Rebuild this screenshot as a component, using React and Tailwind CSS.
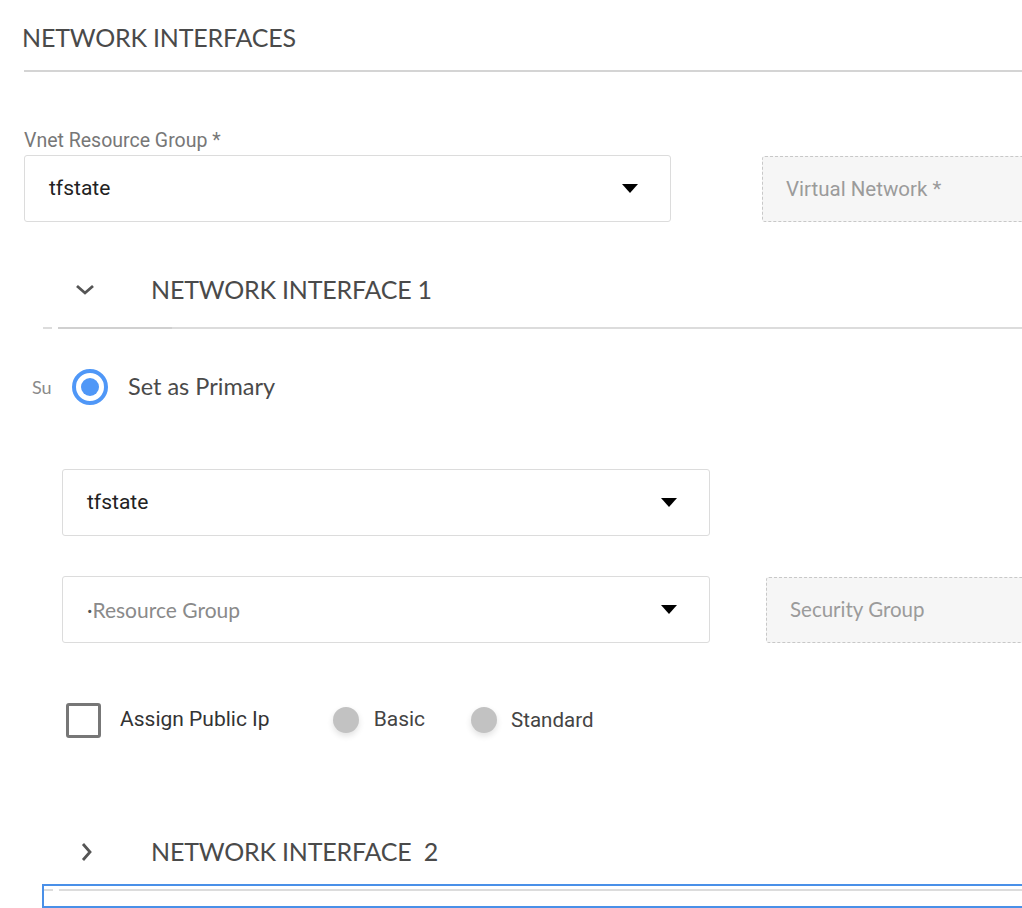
import React from "react";

const Caret = () => (
  <svg width="16" height="9" viewBox="0 0 16 9" className="shrink-0">
    <path d="M0 0 L16 0 L8 9 Z" fill="#000" />
  </svg>
);

const Select = ({ value, placeholder, className = "" }) => (
  <div className={`flex items-center justify-between h-[67px] border border-[#dcdcdc] rounded-[3px] bg-white pl-[24px] pr-[32px] ${className}`}>
    {value ? (
      <span className="text-[21px] text-[#222]" style={{ fontFamily: "Roboto, sans-serif" }}>{value}</span>
    ) : (
      <span className="text-[21px] text-[#8a8a8a]" style={{ fontFamily: "Lato, sans-serif" }}>
        <span className="text-[#555]">·</span>
        {placeholder}
      </span>
    )}
    <Caret />
  </div>
);

const Disabled = ({ label, className = "" }) => (
  <div className={`flex items-center h-[66px] border border-dashed border-[#c8c8c8] rounded-[3px] bg-[#f6f6f6] pl-[23px] w-[320px] shrink-0 ${className}`}>
    <span className="text-[20.5px] text-[#9b9b9b] whitespace-nowrap">{label}</span>
  </div>
);

const SectionHeader = ({ open, title }) => (
  <div className="flex items-center h-[40px]">
    <div className="w-[151px] flex justify-start">
      {open ? (
        <svg width="22" height="14" viewBox="0 0 22 14" className="ml-[74px]">
          <path d="M3 3 L11 10 L19 3" fill="none" stroke="#555" strokeWidth="2.8" />
        </svg>
      ) : (
        <svg width="14" height="20" viewBox="0 0 14 20" className="ml-[80px]">
          <path d="M3 2 L10 10 L3 18" fill="none" stroke="#555" strokeWidth="2.8" />
        </svg>
      )}
    </div>
    <span className="text-[25px] text-[#4a4a4a] whitespace-pre tracking-[-0.2px]">{title}</span>
  </div>
);

export default function App() {
  return (
    <div className="w-[1022px] h-[908px] overflow-hidden bg-white" style={{ fontFamily: "Lato, 'Open Sans', sans-serif" }}>
      {/* Title */}
      <div className="pl-[22px] pt-[24px]">
        <h1 className="text-[25px] leading-[26px] text-[#4a4a4a] tracking-[-0.2px]">NETWORK INTERFACES</h1>
      </div>
      <div className="ml-[24px] mt-[20px] h-[2px] bg-[#d4d4d4]" />

      {/* Vnet row */}
      <div className="pl-[24px] mt-[58px]" style={{ fontFamily: "Roboto, sans-serif" }}>
        <div className="text-[19.5px] leading-[22px] text-[#777]">Vnet Resource Group *</div>
        <div className="flex items-end gap-[91px] mt-[3px]">
          <Select value="tfstate" className="w-[647px] shrink-0" />
          <Disabled label="Virtual Network *" />
        </div>
      </div>

      {/* Network interface 1 */}
      <div className="mt-[48px]">
        <SectionHeader open title="NETWORK INTERFACE 1" />
      </div>
      <div className="relative mt-[17px] h-[2px] ml-[43px] bg-[#dcdcdc]">
        <div className="absolute left-[9px] top-0 w-[6px] h-[2px] bg-white" />
        <div className="absolute left-[15px] top-0 w-[114px] h-[2px] bg-[#d0d0d0]" />
      </div>

      <div className="flex items-center mt-[40px] h-[36px]">
        <span className="ml-[32px] w-[40px] text-[18px] text-[#8a8a8a]">Su</span>
        <div className="w-[36px] h-[36px] rounded-full border-[4px] border-[#4f97f7] flex items-center justify-center">
          <div className="w-[18px] h-[18px] rounded-full bg-[#4f97f7]" />
        </div>
        <span className="ml-[20px] text-[23.5px] text-[#4a4a4a]">Set as Primary</span>
      </div>

      <div className="ml-[62px] mt-[64px]">
        <Select value="tfstate" className="w-[648px]" />
        <div className="flex items-center gap-[56px] mt-[40px]">
          <Select placeholder="Resource Group" className="w-[648px] shrink-0" />
          <Disabled label="Security Group" />
        </div>
      </div>

      <div className="flex items-center ml-[66px] mt-[59px] h-[36px]" style={{ fontFamily: "Roboto, sans-serif" }}>
        <div className="w-[35px] h-[35px] border-[3px] border-[#777] rounded-[3px]" />
        <span className="ml-[19px] text-[21px] text-[#333]">Assign Public Ip</span>
        <div className="ml-[63px] w-[26px] h-[26px] rounded-full bg-[#c2c2c2] shadow-[0_3px_6px_rgba(0,0,0,0.12)]" />
        <span className="ml-[15px] text-[21px] text-[#444]">Basic</span>
        <div className="ml-[46px] w-[26px] h-[26px] rounded-full bg-[#c2c2c2] shadow-[0_3px_6px_rgba(0,0,0,0.12)]" />
        <span className="ml-[14px] text-[20.5px] text-[#444]">Standard</span>
      </div>

      {/* Network interface 2 */}
      <div className="mt-[94px]">
        <SectionHeader title="NETWORK INTERFACE  2" />
      </div>
      <div className="mt-[12px] ml-[42px] h-[24px] border-[2px] border-r-0 border-[#4a90e8] pt-[3px]">
        <div className="relative h-[2px] bg-[#dcdcdc]">
          <div className="absolute left-[9px] top-0 w-[6px] h-[2px] bg-white" />
        </div>
      </div>
    </div>
  );
}
